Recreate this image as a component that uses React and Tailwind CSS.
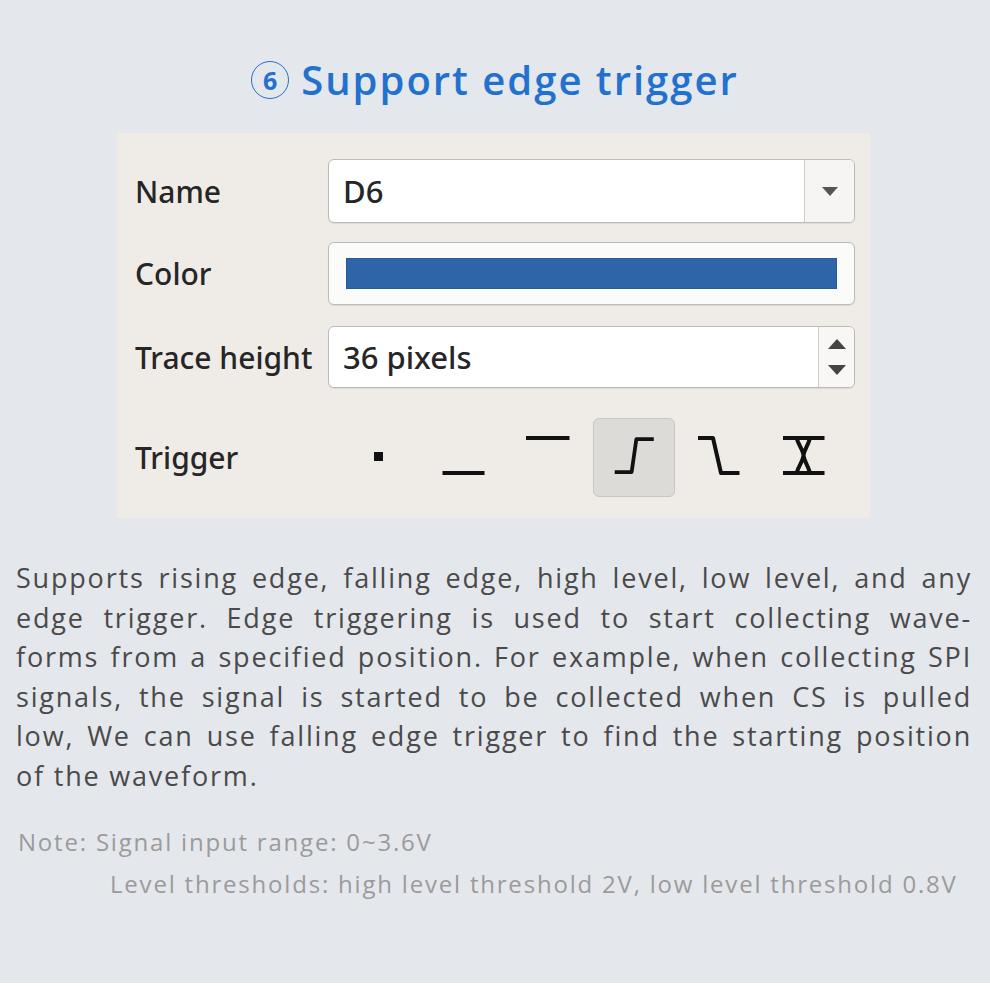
import React from 'react';

const bodyLines = [
  'Supports rising edge, falling edge, high level, low level, and any',
  'edge trigger. Edge triggering is used to start collecting wave-',
  'forms from a specified position. For example, when collecting SPI',
  'signals, the signal is started to be collected when CS is pulled',
  'low, We can use falling edge trigger to find the starting position',
];

function TriggerIcon({ kind }) {
  return (
    <svg width="85" height="79" viewBox="0 0 85 79" fill="none" stroke="#111" strokeWidth="4" strokeLinejoin="round">
      {kind === 'any' && <rect x="38" y="34" width="9" height="9" fill="#111" stroke="none" />}
      {kind === 'low' && <path d="M21.5 55 H63.5" />}
      {kind === 'high' && <path d="M20 20 H63.5" />}
      {kind === 'rise' && <path d="M22 55 H40 L45 20 H63.5" />}
      {kind === 'fall' && <path d="M22 20 H37 L45 55 H63.5" />}
      {kind === 'both' && (
        <path d="M22 20 H63.5 M22 55 H63.5 M35.5 20 C38 28 42 32 42.5 37.5 C43 43 47 47 49 55 M49 20 C47 28 43 32 42.5 37.5 C42 43 38 47 35.5 55" />
      )}
    </svg>
  );
}

export default function App() {
  const triggers = ['any', 'low', 'high', 'rise', 'fall', 'both'];

  return (
    <div className="w-[990px] h-[990px] bg-white">
      <div className="h-[983px] bg-[#e4e7eb] font-['Open_Sans',sans-serif]">
        {/* title */}
        <div className="flex items-center justify-center gap-[12px] pt-[57px] text-[#2371cf]">
          <span className="flex items-center justify-center w-[38px] h-[38px] rounded-full border-[1.5px] border-[#2371cf] text-[25px] font-bold leading-none">
            6
          </span>
          <h1 className="text-[40px] font-semibold leading-[46px] tracking-[2px]">Support edge trigger</h1>
        </div>

        {/* settings panel */}
        <div className="ml-[117px] mt-[30px] w-[753px] h-[385px] bg-[#efece7] pl-[18px] pt-[26px] font-['Noto_Sans',sans-serif] font-medium text-[#262626]">
          <div className="grid grid-cols-[193px_527px] items-center">
            <span className="text-[30px]">Name</span>
            <div className="flex h-[64px] rounded-[6px] border border-[#bdbbb7] bg-white overflow-hidden shadow-[0_1px_1px_rgba(0,0,0,0.08)]">
              <div className="flex-1 flex items-center pl-[14px] text-[31px]">D6</div>
              <div className="w-[50px] border-l border-[#cfcdc9] bg-[#f6f5f3] flex items-center justify-center">
                <svg width="16" height="9" viewBox="0 0 16 9"><path d="M0 0 H16 L8 9 Z" fill="#555" /></svg>
              </div>
            </div>

            <span className="mt-[19px] text-[30px]">Color</span>
            <div className="mt-[19px] flex items-center h-[63px] rounded-[6px] border border-[#bdbbb7] bg-[#fbfbfa] px-[17px] shadow-[0_1px_1px_rgba(0,0,0,0.08)]">
              <div className="flex-1 h-[31px] bg-[#2e65a8] border border-[#2a5a96]" />
            </div>

            <span className="mt-[21px] text-[30px]">Trace height</span>
            <div className="mt-[21px] flex h-[62px] rounded-[6px] border border-[#bdbbb7] bg-white overflow-hidden shadow-[0_1px_1px_rgba(0,0,0,0.08)]">
              <div className="flex-1 flex items-center pl-[14px] text-[31px]">36 pixels</div>
              <div className="w-[36px] border-l border-[#cfcdc9] bg-[#f8f7f5] flex flex-col items-center justify-center gap-[16px]">
                <svg width="18" height="10" viewBox="0 0 18 10"><path d="M0 10 H18 L9 0 Z" fill="#444" /></svg>
                <svg width="18" height="10" viewBox="0 0 18 10"><path d="M0 0 H18 L9 10 Z" fill="#444" /></svg>
              </div>
            </div>

            <span className="mt-[30px] text-[30px]">Trigger</span>
            <div className="mt-[30px] flex ml-[8px]">
              {triggers.map((t) => (
                <div key={t} className="w-[85px] h-[79px] flex items-center justify-center">
                  {t === 'rise' ? (
                    <div className="w-[82px] h-[79px] rounded-[6px] bg-[#dddbd7] border border-[#c9c7c3] flex items-center justify-center">
                      <TriggerIcon kind={t} />
                    </div>
                  ) : (
                    <TriggerIcon kind={t} />
                  )}
                </div>
              ))}
            </div>
          </div>
        </div>

        {/* description */}
        <div className="mt-[40px] pl-[16px] pr-[18px] text-[27px] leading-[39.5px] tracking-[1.8px] text-[#4a4a4a]">
          {bodyLines.map((line) => (
            <span key={line} className="block text-justify [text-align-last:justify]">
              {line}
            </span>
          ))}
          <span className="block">of the waveform.</span>
        </div>

        <div className="mt-[26px] text-[24px] leading-[42px] tracking-[1.8px] text-[#9b9b9b]">
          <p className="pl-[18px]">Note: Signal input range: 0~3.6V</p>
          <p className="pl-[110px]">Level thresholds: high level threshold 2V, low level threshold 0.8V</p>
        </div>
      </div>
    </div>
  );
}
